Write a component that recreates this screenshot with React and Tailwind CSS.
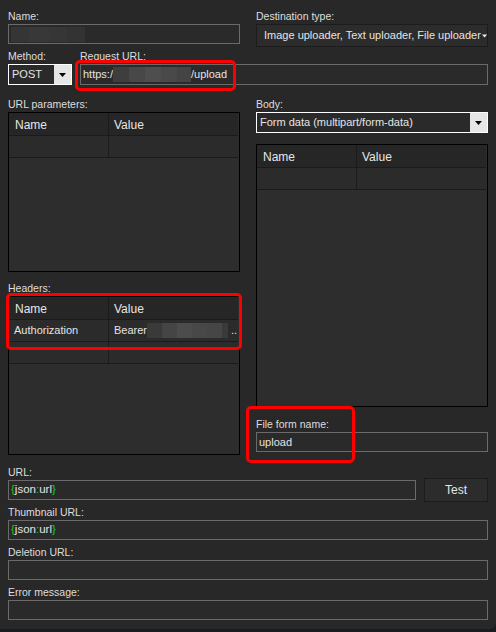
import React from "react";

const font = { fontFamily: '"Liberation Sans", Arial, sans-serif' };

function Label({ children }) {
  return <div className="h-4 leading-4 text-[10.5px] text-[#dedede] whitespace-nowrap">{children}</div>;
}

function Input({ className = "", children }) {
  return (
    <div className={"h-[20px] border border-[#6a6a6a] bg-[#2a2a2a] flex items-center pl-[2px] text-[11px] text-[#e4e4e4] overflow-hidden whitespace-nowrap " + className}>
      {children}
    </div>
  );
}

function Blur({ shades }) {
  return (
    <span className="inline-flex h-[15px]">
      {shades.map((s, i) => (
        <span key={i} className="inline-block h-full" style={{ width: s[0], background: s[1] }} />
      ))}
    </span>
  );
}

function Combo({ text, className = "" }) {
  return (
    <div className={"h-[21px] border border-white bg-[#2a2a2a] flex text-[11px] text-[#e4e4e4] " + className}>
      <div className="flex-1 flex items-center pl-[3px] whitespace-nowrap overflow-hidden">{text}</div>
      <div className="w-[17px] bg-[#e6e6e6] flex items-center justify-center">
        <svg width="7" height="4" viewBox="0 0 7 4"><path d="M0 0h7L3.5 4z" fill="#000" /></svg>
      </div>
    </div>
  );
}

function Table({ h, rows, firstCol = 100 }) {
  return (
    <div className="border border-black bg-[#2d2d2d] overflow-hidden" style={{ height: h }}>
      <div className="flex h-[23px] bg-[#262626] border-b border-[#1b1b1b] mr-[1px] text-[12px] text-[#e6e6e6]">
        <div className="border-r border-[#1b1b1b] flex items-center pl-[6px] pt-[2px]" style={{ width: firstCol }}>Name</div>
        <div className="flex-1 flex items-center pl-[5px] pt-[2px]">Value</div>
      </div>
      {rows.map((r, i) => (
        <div key={i} className="flex h-[22px] bg-[#2b2b2b] border-b border-[#1b1b1b] mr-[1px] text-[11px] text-[#e4e4e4]">
          <div className="border-r border-[#1b1b1b] flex items-center pl-[5px]" style={{ width: firstCol }}>{r[0]}</div>
          <div className="flex-1 flex items-center pl-[5px] whitespace-nowrap overflow-hidden">{r[1]}</div>
        </div>
      ))}
    </div>
  );
}

function Json() {
  return (
    <span className="text-[11.5px]">
      <span className="text-[#18d018]">{"{"}</span>
      <span>json</span>
      <span className="text-[#18d018]">:</span>
      <span>url</span>
      <span className="text-[#18d018]">{"}"}</span>
    </span>
  );
}

export default function App() {
  return (
    <div className="w-[496px] h-[632px] bg-[#1b1b22] overflow-hidden" style={font}>
      <div className="relative h-[629px] w-[496px] bg-[#282828] rounded-br-[6px] px-2 pt-2">
        {/* Row A */}
        <div className="flex gap-4 h-[40px]">
          <div className="w-[232px]">
            <Label>Name:</Label>
            <Input className="pl-[1px]">
              <Blur shades={[[18, "#353535"], [20, "#383838"], [18, "#363636"], [18, "#333333"]]} />
            </Input>
          </div>
          <div className="w-[232px]">
            <Label>Destination type:</Label>
            <div className="h-[23px] border border-[#1c1c1c] bg-[#2c2c2c] flex items-center pl-[7px] text-[11px] text-[#e4e4e4] whitespace-nowrap overflow-hidden">
              <span>Image uploader, Text uploader, File uploader</span>
              <svg className="ml-[1px] mt-[1px]" width="7" height="4" viewBox="0 0 7 4"><path d="M0 0h7L3.5 4z" fill="#e8e8e8" /></svg>
            </div>
          </div>
        </div>
        {/* Row B */}
        <div className="flex gap-2 h-[48px]">
          <div className="w-[64px]">
            <Label>Method:</Label>
            <Combo text="POST" />
          </div>
          <div className="flex-1">
            <Label>Request URL:</Label>
            <Input className="h-[21px]">
              <span>https:/</span>
              <Blur shades={[[16, "#3e3e3e"], [16, "#484848"], [16, "#4e4e4e"], [16, "#494949"], [14, "#444444"]]} />
              <span>/upload</span>
            </Input>
          </div>
        </div>
        {/* Row C */}
        <div className="flex gap-4 h-[368px]">
          <div className="w-[232px] flex flex-col">
            <Label>URL parameters:</Label>
            <Table h={160} rows={[["", ""]]} />
            <div className="h-2" />
            <Label>Headers:</Label>
            <Table
              h={159}
              rows={[
                ["Authorization", <span className="flex items-center w-full">Bearer<Blur shades={[[15, "#3a3a3a"], [15, "#454545"], [15, "#4c4c4c"], [15, "#484848"], [15, "#464646"], [6, "#3a3a3a"]]} /><span className="ml-[3px]">..</span></span>],
                ["", ""],
              ]}
            />
          </div>
          <div className="w-[232px] flex flex-col">
            <Label>Body:</Label>
            <Combo text="Form data (multipart/form-data)" />
            <div className="h-[11px]" />
            <Table h={263} rows={[["", ""]]} />
            <div className="h-[9px]" />
            <Label>File form name:</Label>
            <Input>upload</Input>
          </div>
        </div>
        {/* Row D */}
        <div className="flex flex-col">
          <Label>URL:</Label>
          <div className="flex gap-2 h-[20px] items-start">
            <Input className="w-[408px]"><Json /></Input>
            <div className="-mt-[2px] w-[64px] h-[24px] border border-[#1d1d1d] bg-[#2c2c2c] flex items-center justify-center text-[12px] text-[#e6e6e6]">Test</div>
          </div>
          <div className="h-1" />
          <Label>Thumbnail URL:</Label>
          <Input><Json /></Input>
          <div className="h-1" />
          <Label>Deletion URL:</Label>
          <Input />
          <div className="h-1" />
          <Label>Error message:</Label>
          <Input />
        </div>

        {/* red highlight overlays */}
        <div className="absolute left-[75px] top-[60px] w-[161px] h-[31px] border-[3px] border-[#ff0000] rounded-[5px]" />
        <div className="absolute left-[6px] top-[293px] w-[236px] h-[57px] border-[3px] border-[#ff0000] rounded-[5px]" />
        <div className="absolute left-[246px] top-[406px] w-[109px] h-[57px] border-[3px] border-[#ff0000] rounded-[5px]" />
      </div>
    </div>
  );
}
